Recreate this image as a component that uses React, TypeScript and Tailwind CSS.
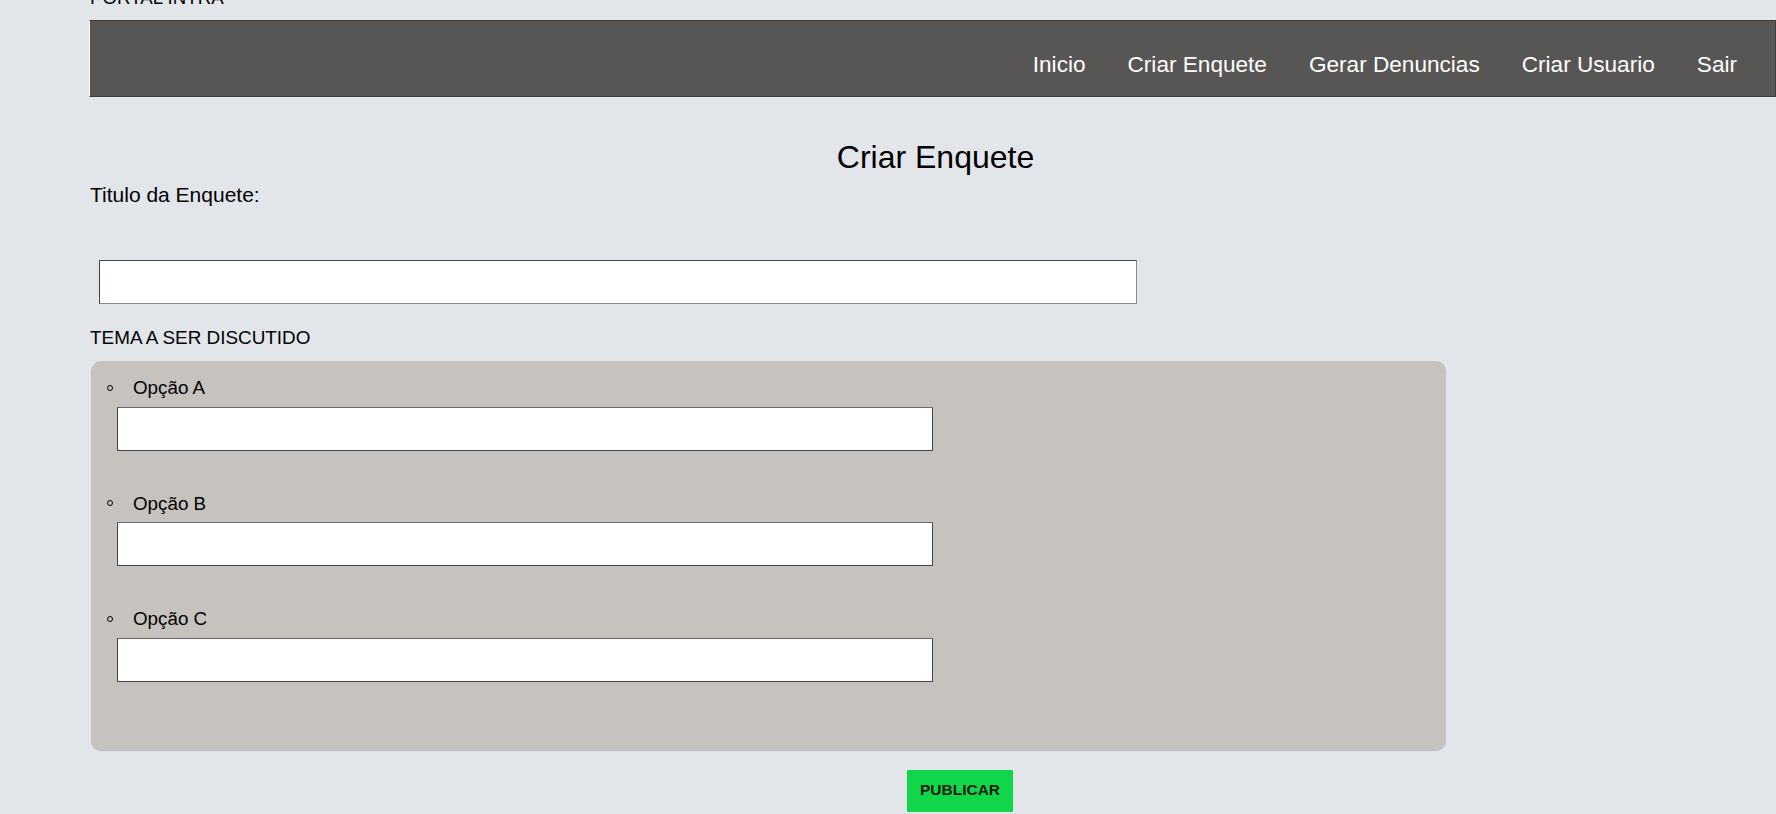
import { useState } from "react";

const links = ["Inicio", "Criar Enquete", "Gerar Denuncias", "Criar Usuario", "Sair"];
const opcoes = ["Opção A", "Opção B", "Opção C"];

export default function App() {
  const [titulo, setTitulo] = useState("");
  const [valores, setValores] = useState<string[]>(["", "", ""]);

  const mudarOpcao = (i: number, v: string) => {
    const novos = [...valores];
    novos[i] = v;
    setValores(novos);
  };

  return (
    <div
      className="w-full h-[814px] overflow-hidden bg-[#e2e5ea] text-black"
      style={{ fontFamily: '"Liberation Sans", Arial, sans-serif' }}
    >
      <div className="ml-[89px]">
        {/* header */}
        <div className="-mt-[13px] h-[33px] pl-[1px] text-[18.7px] leading-[21px]">PORTAL INTRA</div>

        {/* nav */}
        <nav className="h-[77px] bg-[#585654] border border-[#3e3d3b] border-l-white flex justify-end gap-[42px] pr-[38px] pt-[31px]">
          {links.map((l) => (
            <a key={l} href="#" className="text-white text-[22.6px] leading-[26px] h-[26px]">
              {l}
            </a>
          ))}
        </nav>

        {/* form */}
        <h1 className="mt-[42px] pl-[6px] text-center text-[32px] leading-[37px]">Criar Enquete</h1>
        <label className="block mt-[7px] pl-[1px] text-[21px] leading-[24px]">Titulo da Enquete:</label>
        <input
          value={titulo}
          onChange={(e) => setTitulo(e.target.value)}
          className="block mt-[53px] ml-[10px] w-[1038px] h-[44px] bg-white border border-[#444] border-b-[#8a8a8a] border-r-[#8a8a8a] outline-none px-2"
        />
        <p className="mt-[23px] pl-[1px] text-[18.9px] leading-[21px]">TEMA A SER DISCUTIDO</p>

        <div className="mt-[13px] ml-[2px] w-[1355px] h-[389px] bg-[#c6c3be] rounded-[10px] shadow-[0_1px_1px_rgba(0,0,0,0.18)] pt-[16px]">
          <ul>
            {opcoes.map((o, i) => (
              <li key={o} className={i > 0 ? "mt-[42px]" : ""}>
                <div className="flex items-center h-[21px]">
                  <span className="ml-[16px] w-[6px] h-[6px] rounded-full border border-black" />
                  <span className="ml-[20px] text-[18.8px] leading-[21px]">{o}</span>
                </div>
                <input
                  value={valores[i]}
                  onChange={(e) => mudarOpcao(i, e.target.value)}
                  className="block mt-[8.5px] ml-[26px] w-[816px] h-[44px] bg-white border border-[#444] border-t-[#6a6a6a] outline-none px-2"
                />
              </li>
            ))}
          </ul>
        </div>

        <button className="mt-[19px] ml-[817px] w-[108px] h-[44px] bg-[#12d64a] border border-[#e9f3ec] pb-[2px] font-bold text-[15.5px] text-[#0d1a10]">
          PUBLICAR
        </button>
      </div>
    </div>
  );
}
